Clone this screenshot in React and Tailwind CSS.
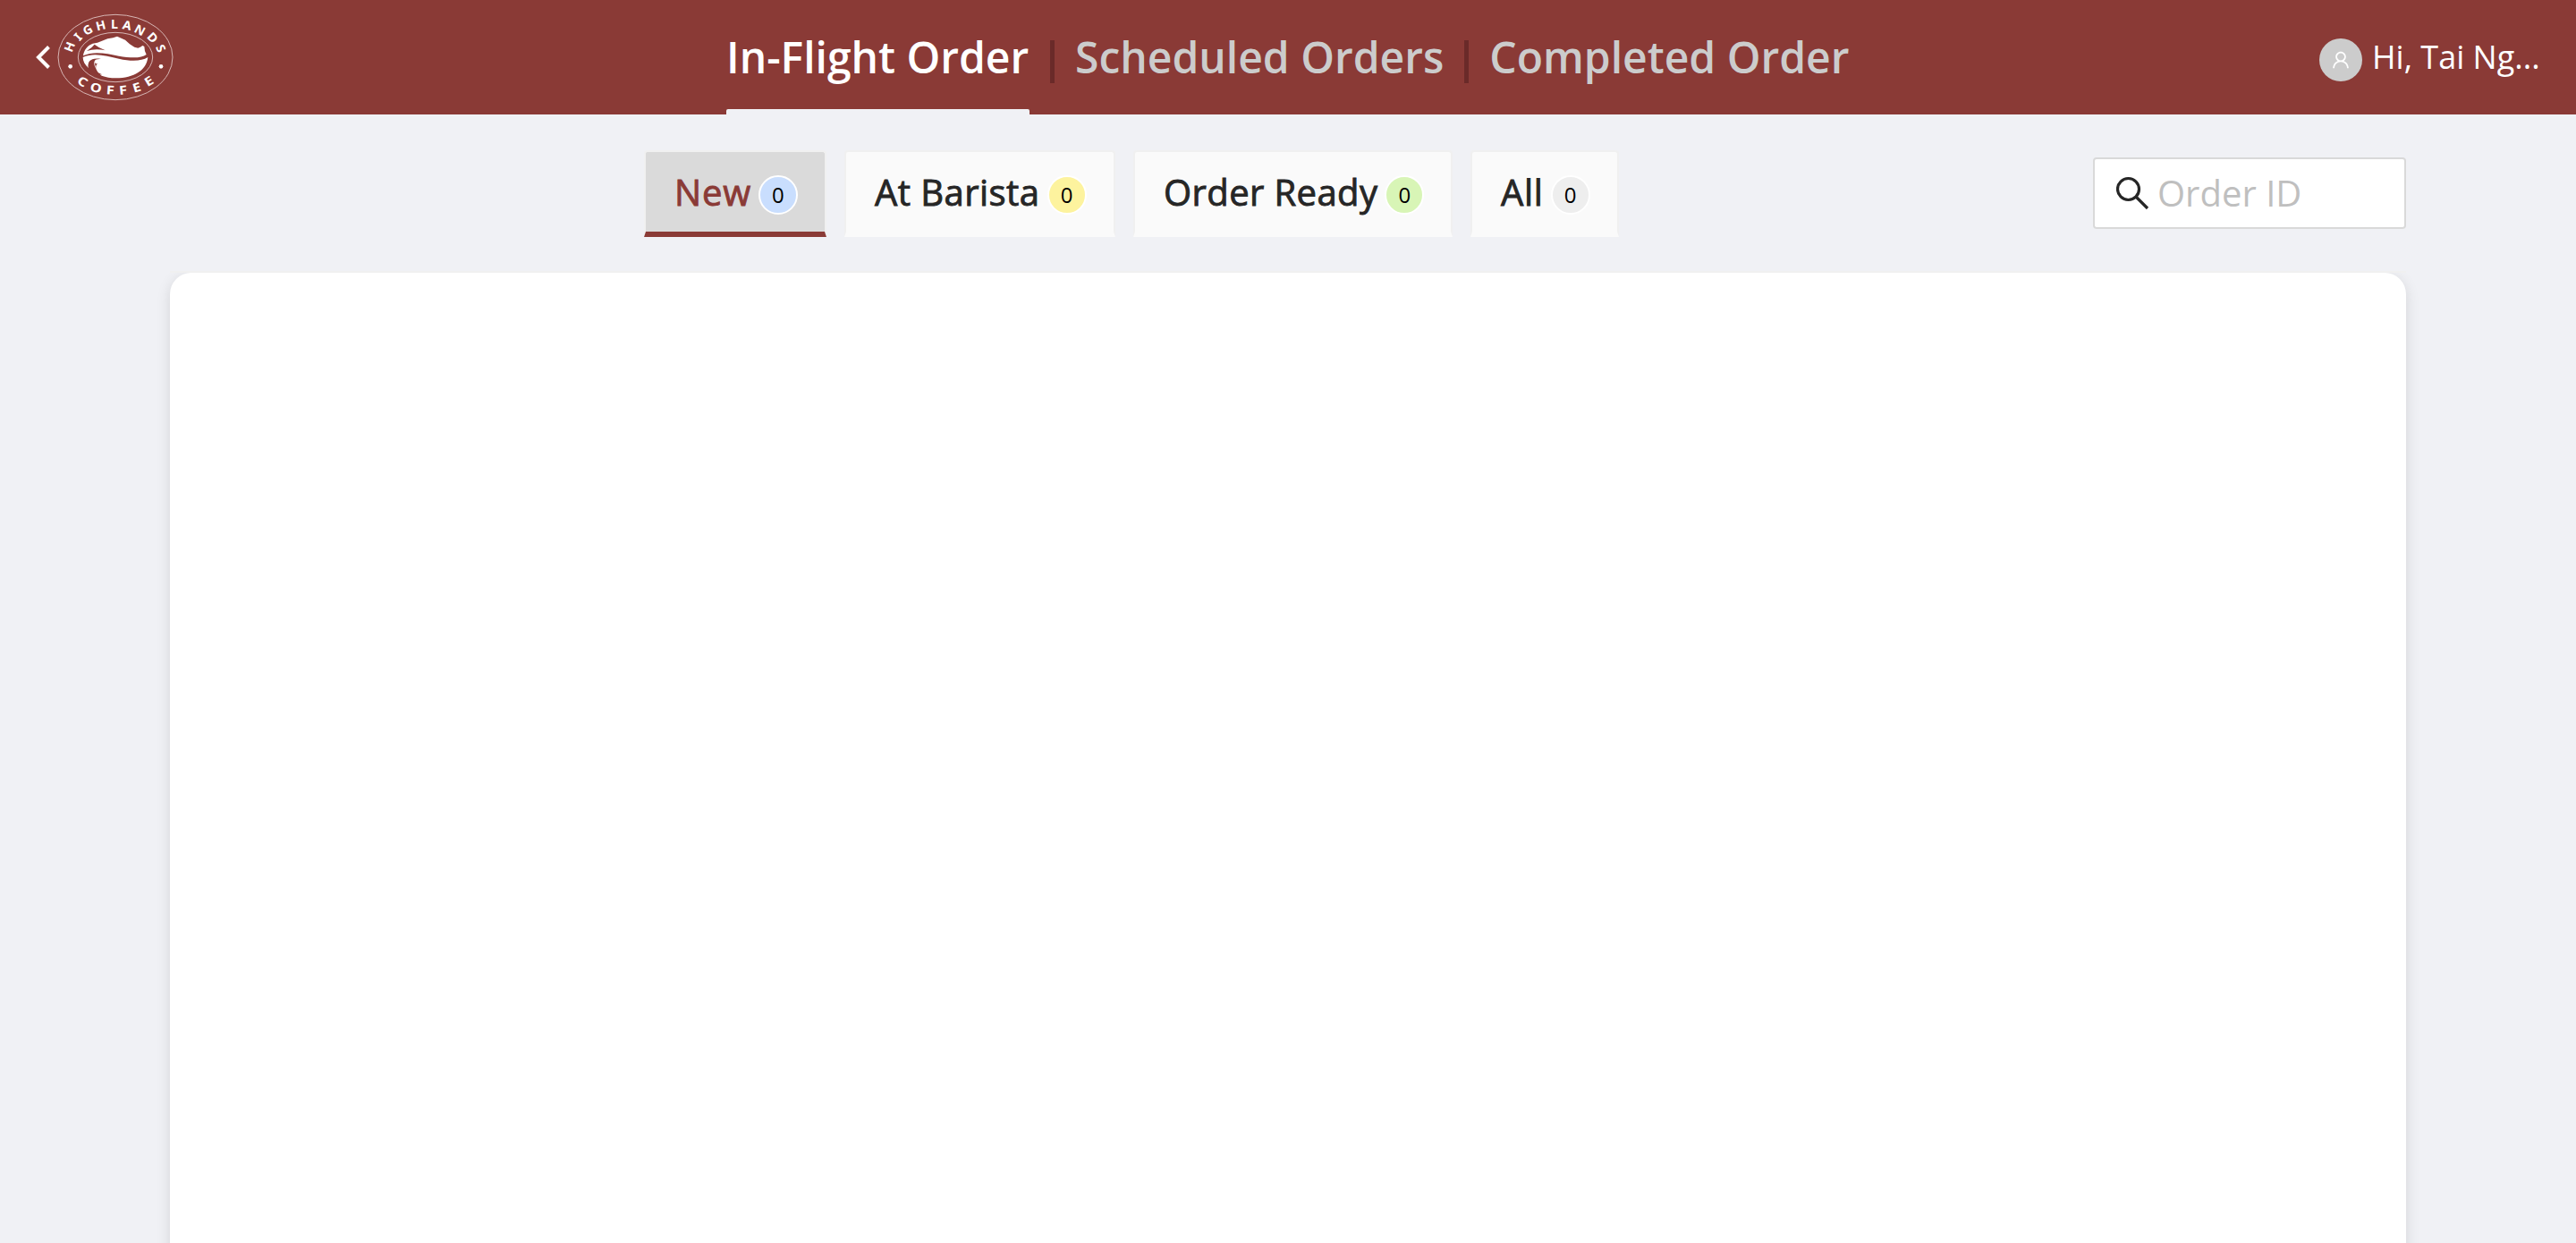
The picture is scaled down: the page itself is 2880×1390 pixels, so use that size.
import React from "react";
import { AiOutlineUser } from "react-icons/ai";

const ring = [
  ["H", 174, 157, -68], ["I", 202, 123, -48], ["G", 235, 100, -30],
  ["H", 279, 85, -14], ["L", 325, 81, 0], ["A", 367, 84, 12],
  ["N", 410, 101, 28], ["D", 453, 126, 46], ["S", 481, 162, 66],
  ["C", 218, 273, 34], ["O", 263, 294, 16], ["F", 311, 302, 4],
  ["F", 354, 302, -5], ["E", 399, 293, -16], ["E", 440, 272, -31],
];

function Logo() {
  return (
    <svg viewBox="133 45 390 294" className="h-[98px] w-[130px]" fill="#fff">
      <ellipse cx="328" cy="192" rx="192" ry="143" fill="none" stroke="#e6cfce" strokeWidth="2.500" />
      <ellipse cx="328" cy="192" rx="125" ry="83" fill="none" stroke="#e6cfce" strokeWidth="2.500" />
      {ring.map(([c, x, y, r], i) => (
        <text
          key={i}
          transform={`translate(${x} ${y}) rotate(${r}) scale(${i < 9 ? 1.04 : 1.2} 1)`}
          y="15"
          textAnchor="middle"
          className="font-['Noto_Sans',sans-serif] text-[41px] font-bold"
        >
          {c}
        </text>
      ))}
      <circle cx="177" cy="223" r="7" />
      <circle cx="481" cy="223" r="7" />
      <path d="M220 187C222 168 235 152 252 146L268 143L302 130Q322 127 334 122L361 134L376 148L392 158L404 161Q414 158 419 153L425 156Q425 170 432 183C415 196 380 195 340 188C300 180 255 170 220 187Z" />
      <path d="M232 171Q250 160 258 149Q273 161 294 169Q260 162 232 171Z" fill="#8a3a36" />
      <path d="M219 192C255 175 300 188 340 197C380 206 415 206 437 192C433 235 390 262 330 262C312 262 295 259 282 254C262 240 258 222 268 213C258 216 254 204 266 199C250 196 234 208 238 228C226 218 219 206 219 192Z" />
      <path d="M238 228C232 205 248 192 280 198C260 196 250 206 252 216C254 234 268 245 284 250C262 250 242 240 238 228Z" fill="#8a3a36" />
      <path d="M266 198C256 202 252 216 266 234C258 216 256 206 266 198Z" />
    </svg>
  );
}

const navItems = [
  { label: "In-Flight Order", active: true },
  { label: "Scheduled Orders", divider: true },
  { label: "Completed Order", divider: true },
];

const tabs = [
  { label: "New", badge: "bg-[#c9defe]", width: "w-[204px]", tracking: "tracking-[0.8px]", active: true },
  { label: "At Barista", badge: "bg-[#fdf39e]", width: "w-[303px]", tracking: "tracking-[0.45px]" },
  { label: "Order Ready", badge: "bg-[#d8f5b6]", width: "w-[357px]", tracking: "tracking-[0.4px]" },
  { label: "All", badge: "bg-[#eeeeee]", width: "w-[166px]", tracking: "tracking-[0.7px]" },
];

export default function App() {
  return (
    <div className="h-[1390px] w-[2880px] overflow-hidden bg-[#f0f1f5] font-['Open_Sans',sans-serif]">
      <header className="grid h-32 grid-cols-[812px_minmax(0,1fr)_813px] bg-[#8a3a36]">
        <div className="flex items-center pl-10">
          <svg viewBox="0 0 16 26" className="h-[26px] w-4" fill="none" stroke="#fff" strokeWidth="4">
            <path d="M14.500 1.500L3 13L14.500 24.500" />
          </svg>
          <div className="ml-2"><Logo /></div>
        </div>
        <nav className="flex">
          {navItems.map(({ label, active, divider }) => (
            <React.Fragment key={label}>
              {divider && <span className="mx-[23px] mt-[45px] h-12 w-[5px] shrink-0 bg-[#6a2a29]" />}
              <div className="flex shrink-0 flex-col whitespace-nowrap">
                <span className={`${active ? "text-white" : "text-[#cccccc]"} flex h-[122px] items-center pt-1.5 text-5xl font-semibold`}>
                  {label}
                </span>
                {active && <span className="h-1.5 w-[339px] rounded-t-xs bg-[#f0f1f5]" />}
              </div>
            </React.Fragment>
          ))}
        </nav>
        <div className="flex items-center justify-end pr-10">
          <span className="mt-1.5 flex size-12 items-center justify-center rounded-full bg-[#cccccc]">
            <AiOutlineUser className="size-6 text-white" />
          </span>
          <span className="ml-[11px] w-[188px] text-4xl whitespace-nowrap text-white">Hi, Tai Ng...</span>
        </div>
      </header>

      <div className="relative z-10 bg-[#f0f1f5]">
        <div className="mx-[190px] flex h-[177px] items-start justify-between border-b-2 border-[#f0f0f0] pl-[530px]">
          <div className="mt-10 flex gap-5">
            {tabs.map((t) => (
              <div
                key={t.label}
                className={`${t.width} ${t.active
                  ? "border-b-[#8a3a36] bg-[#dadada] text-[#8a3a36]"
                  : "border-b-[#fafafa] bg-[#fafafa] text-[#262626]"} flex h-[97px] items-center gap-2 rounded-t-sm border-x-2 border-t-2 border-b-6 border-x-[#f0f0f0] border-t-[#f0f0f0] pl-8 text-[40px]`}
              >
                <span className={`${t.tracking} whitespace-nowrap [-webkit-text-stroke:0.9px]`}>{t.label}</span>
                <span className={`${t.badge} mt-[7px] flex size-11 shrink-0 items-center justify-center rounded-full border-2 border-white text-2xl text-black`}>
                  0
                </span>
              </div>
            ))}
          </div>
          <label className="mt-12 flex h-20 w-[350px] items-center rounded border-2 border-[#d9d9d9] bg-white pl-6">
            <svg viewBox="0 0 40 40" className="size-10" fill="none" stroke="#262626">
              <circle cx="13.500" cy="15.500" r="12" strokeWidth="3.200" />
              <path d="M22 24L35 37" strokeWidth="3.200" />
            </svg>
            <span className="ml-1.5 text-[40px] text-[#bfbfbf]">Order ID</span>
          </label>
        </div>
      </div>

      <main className="mx-[190px] h-[1200px] rounded-3xl bg-white shadow-[0_4px_16px_rgba(0,0,0,0.12)]" />
    </div>
  );
}
